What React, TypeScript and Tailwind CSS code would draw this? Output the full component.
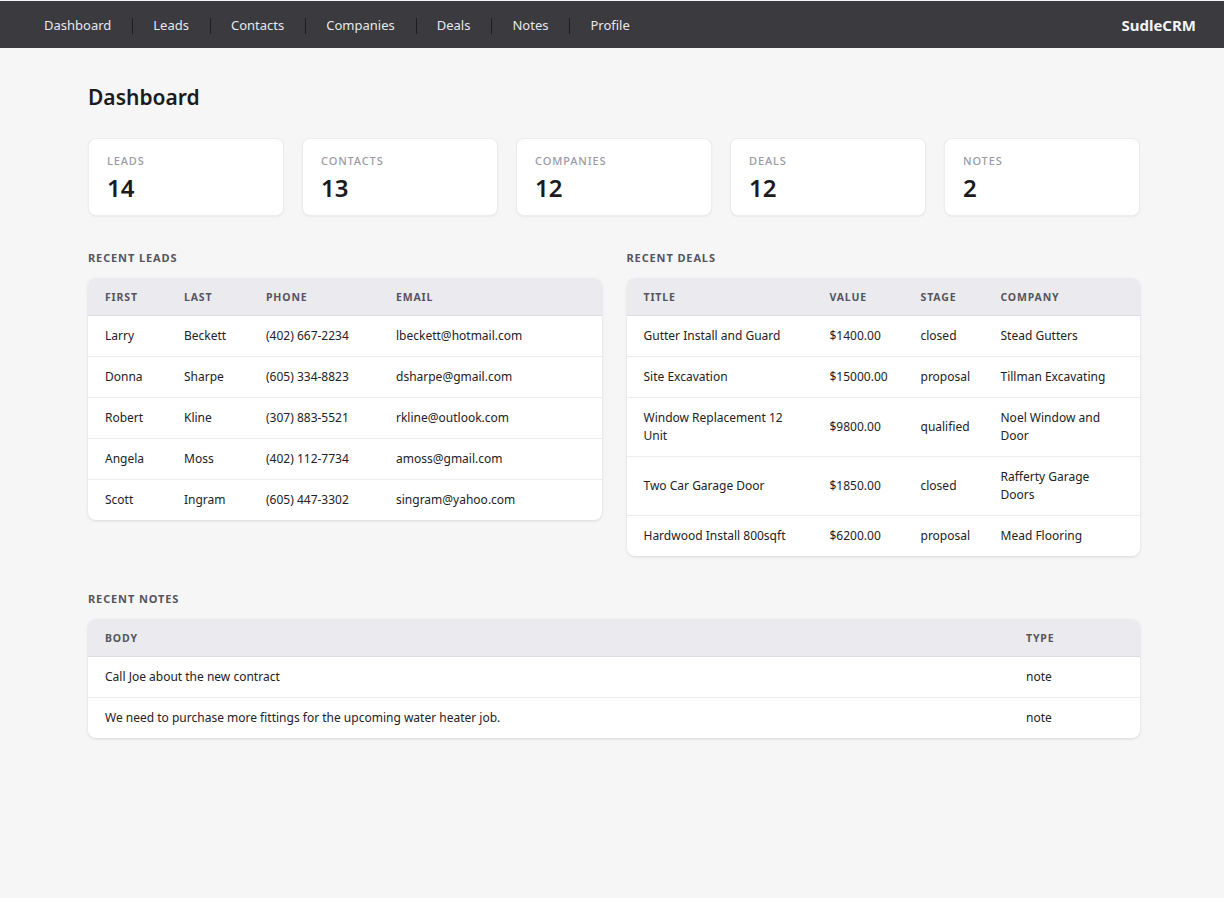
const navLinks = ["Dashboard", "Leads", "Contacts", "Companies", "Deals", "Notes", "Profile"];

const stats = [
  { label: "Leads", value: 14 },
  { label: "Contacts", value: 13 },
  { label: "Companies", value: 12 },
  { label: "Deals", value: 12 },
  { label: "Notes", value: 2 },
];

const leads = [
  ["Larry", "Beckett", "(402) 667-2234", "lbeckett@hotmail.com"],
  ["Donna", "Sharpe", "(605) 334-8823", "dsharpe@gmail.com"],
  ["Robert", "Kline", "(307) 883-5521", "rkline@outlook.com"],
  ["Angela", "Moss", "(402) 112-7734", "amoss@gmail.com"],
  ["Scott", "Ingram", "(605) 447-3302", "singram@yahoo.com"],
];

const deals = [
  ["Gutter Install and Guard", "$1400.00", "closed", "Stead Gutters"],
  ["Site Excavation", "$15000.00", "proposal", "Tillman Excavating"],
  ["Window Replacement 12 Unit", "$9800.00", "qualified", "Noel Window and Door"],
  ["Two Car Garage Door", "$1850.00", "closed", "Rafferty Garage Doors"],
  ["Hardwood Install 800sqft", "$6200.00", "proposal", "Mead Flooring"],
];

const notes = [
  ["Call Joe about the new contract", "note"],
  ["We need to purchase more fittings for the upcoming water heater job.", "note"],
];

function DataTable({ headers, widths, rows }: { headers: string[]; widths: string[]; rows: string[][] }) {
  return (
    <div className="bg-white rounded-lg shadow-[0_1px_3px_rgba(0,0,0,0.12)] overflow-hidden">
      <table className="w-full table-fixed border-collapse">
        <colgroup>
          {widths.map((w, i) => (
            <col key={i} className={w} />
          ))}
        </colgroup>
        <thead>
          <tr className="bg-[#ebebef] border-b border-[#dcdce2]">
            {headers.map((h) => (
              <th
                key={h}
                className="text-left pl-[17px] pr-4 pt-[12px] pb-[10px] text-[10.5px] leading-[15px] font-bold tracking-[0.08em] uppercase text-[#55555f]"
              >
                {h}
              </th>
            ))}
          </tr>
        </thead>
        <tbody>
          {rows.map((r, i) => (
            <tr key={i} className={i < rows.length - 1 ? "border-b border-[#ececee]" : ""}>
              {r.map((c, j) => (
                <td key={j} className="pl-[17px] pr-4 py-[11px] text-[12px] leading-[18px] text-[#222226]">
                  {c}
                </td>
              ))}
            </tr>
          ))}
        </tbody>
      </table>
    </div>
  );
}

function SectionLabel({ children }: { children: string }) {
  return (
    <h2 className="text-[11px] leading-4 font-bold tracking-[0.08em] uppercase text-[#55555f] mb-[12px]">
      {children}
    </h2>
  );
}

export default function App() {
  return (
    <div className="min-h-screen bg-[#f6f6f6] font-['Noto_Sans',sans-serif] pt-px">
      <nav className="h-[47px] bg-[#3a3a3f] flex items-center justify-between pl-[44px] pr-[28px] pt-[2px]">
        <ul className="flex items-center">
          {navLinks.map((l, i) => (
            <li key={l} className="flex items-center">
              {i > 0 && <span className="w-px h-4 bg-[#1e1e22] ml-[21px] mr-[20px]" />}
              <a className="text-[13px] text-[#e8e8ec]">{l}</a>
            </li>
          ))}
        </ul>
        <span className="text-[15px] font-bold text-[#f4f4f6]">SudleCRM</span>
      </nav>

      <main className="w-[1052px] ml-[88px] pt-[34px]">
        <h1 className="text-[21px] leading-[30px] font-semibold text-[#1b1b1f] mb-[26px]">Dashboard</h1>

        <div className="grid grid-cols-5 gap-[18px]">
          {stats.map((s) => (
            <div
              key={s.label}
              className="bg-white rounded-lg border border-[#ececee] shadow-[0_1px_2px_rgba(0,0,0,0.05)] h-[78px] pl-[18px] pt-[14px]"
            >
              <div className="text-[11px] leading-4 font-medium tracking-[0.08em] uppercase text-[#9a9aa6]">
                {s.label}
              </div>
              <div className="text-[24px] leading-[30px] font-semibold text-[#1b1b1f] mt-[4px]">{s.value}</div>
            </div>
          ))}
        </div>

        <div className="grid grid-cols-2 gap-[25px] mt-[34px] items-start">
          <section>
            <SectionLabel>Recent Leads</SectionLabel>
            <DataTable
              headers={["First", "Last", "Phone", "Email"]}
              widths={["w-[79px]", "w-[82px]", "w-[130px]", ""]}
              rows={leads}
            />
          </section>
          <section>
            <SectionLabel>Recent Deals</SectionLabel>
            <DataTable
              headers={["Title", "Value", "Stage", "Company"]}
              widths={["w-[186px]", "w-[91px]", "w-[80px]", ""]}
              rows={deals}
            />
          </section>
        </div>

        <section className="mt-[35px]">
          <SectionLabel>Recent Notes</SectionLabel>
          <DataTable headers={["Body", "Type"]} widths={["", "w-[131px]"]} rows={notes} />
        </section>
      </main>
    </div>
  );
}
